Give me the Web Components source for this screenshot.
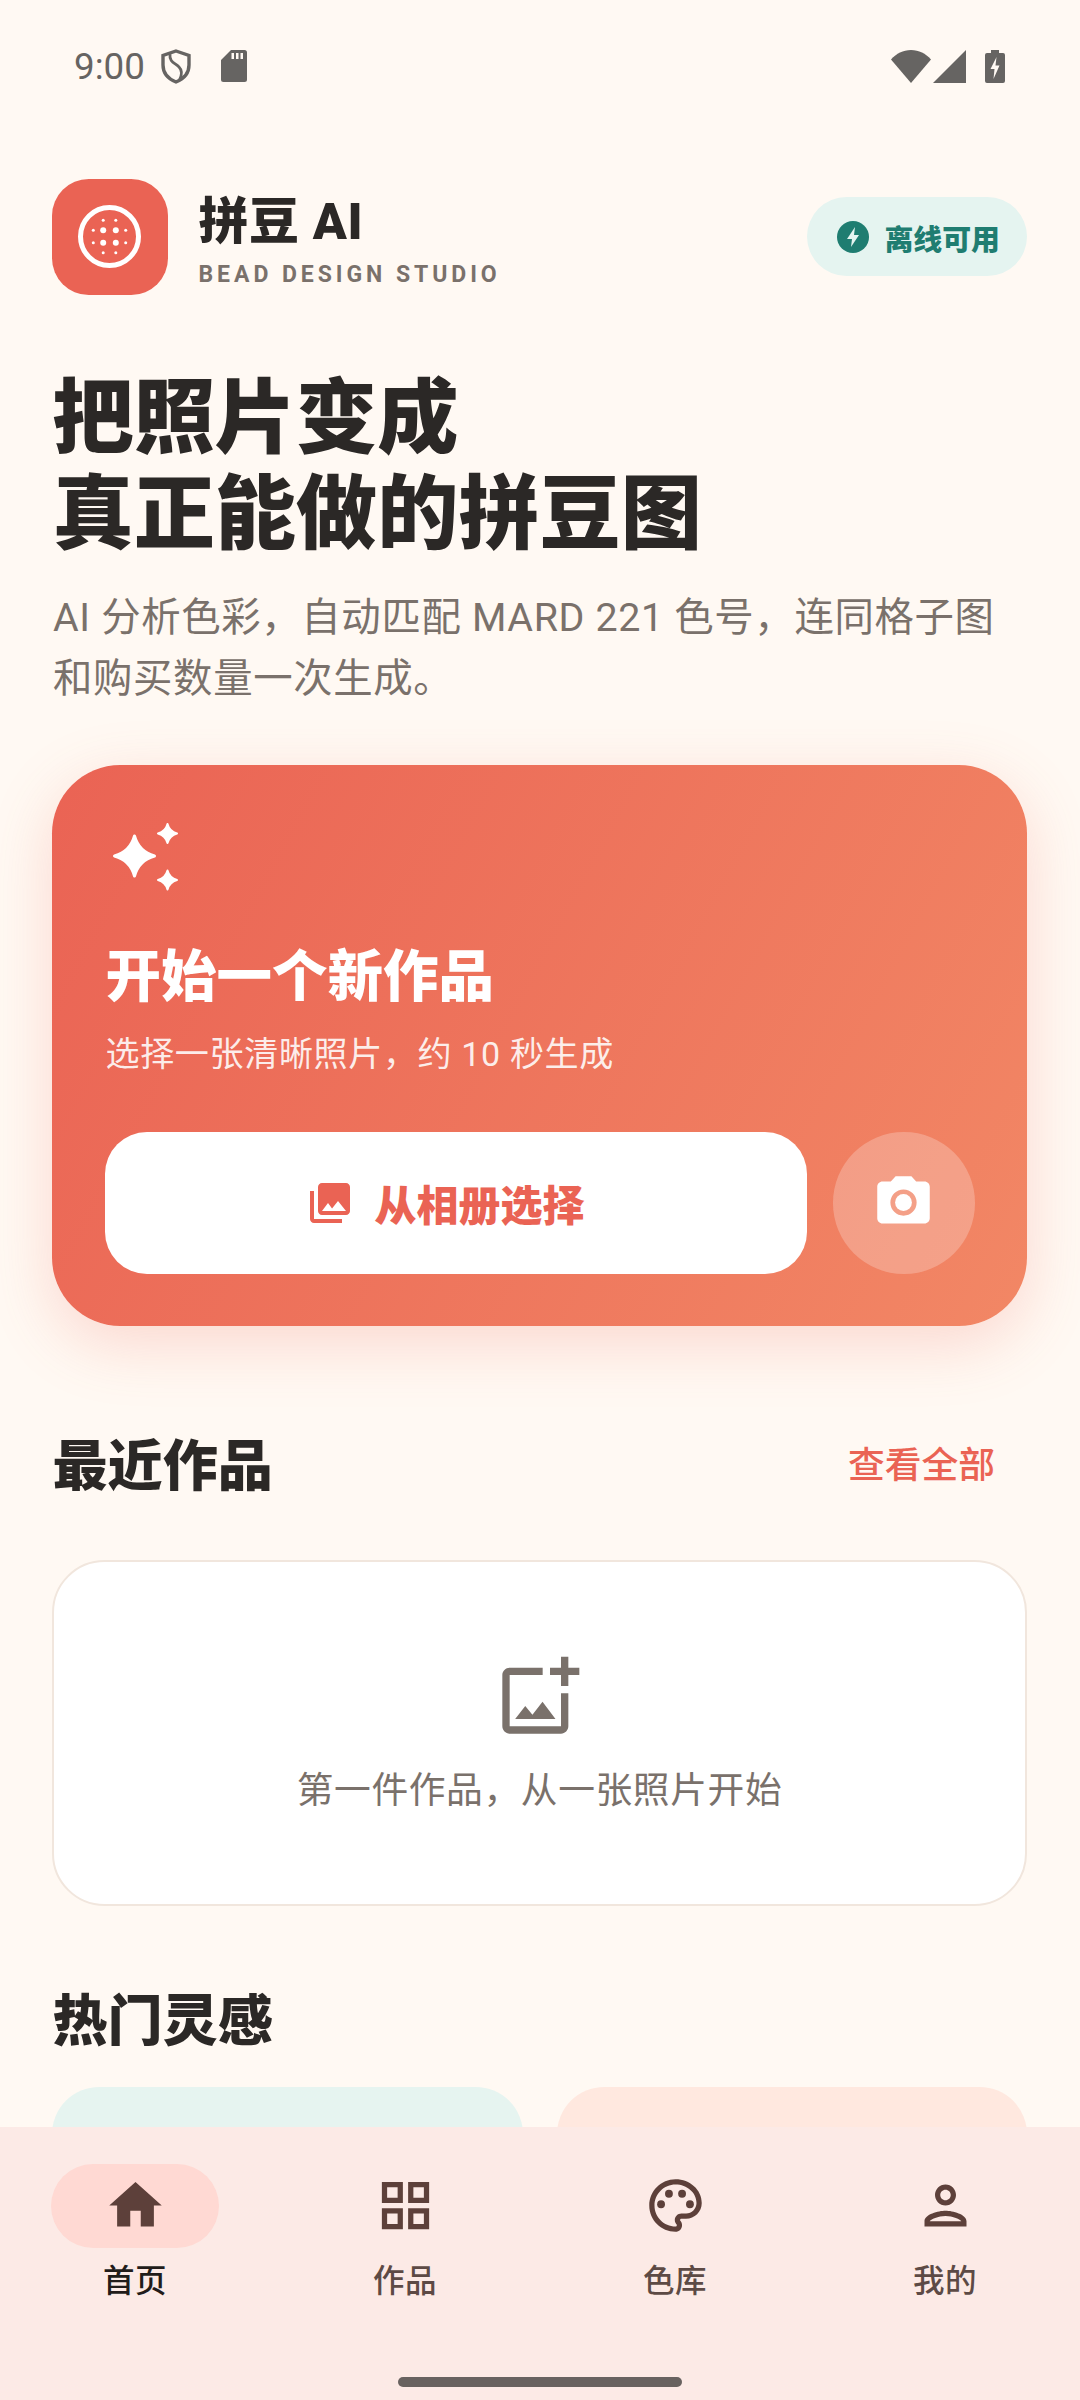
<!DOCTYPE html>
<html lang="zh-CN">
<head>
<meta charset="utf-8">
<title>拼豆 AI</title>
<style>
  html, body { margin: 0; padding: 0; background: #FFF9F3; }
  body { font-family: Roboto, "Noto Sans CJK SC", sans-serif; }
</style>
</head>
<body>
<bd-app>
  <bd-status-bar slot="status" time="9:00"></bd-status-bar>
  <bd-header title-text="拼豆 AI" sub="BEAD DESIGN STUDIO" badge="离线可用"></bd-header>
  <bd-hero>
    <span slot="title">把照片变成<br>真正能做的拼豆图</span>
    AI 分析色彩，自动匹配 MARD 221 色号，连同格子图<br>和购买数量一次生成。
  </bd-hero>
  <bd-start-card heading="开始一个新作品" sub="选择一张清晰照片，约 10 秒生成" action="从相册选择"></bd-start-card>
  <bd-section-head heading="最近作品" link="查看全部" style="margin-top:112px"></bd-section-head>
  <bd-empty-card>第一件作品，从一张照片开始</bd-empty-card>
  <bd-section-head heading="热门灵感" style="margin-top:87px"></bd-section-head>
  <bd-inspiration></bd-inspiration>
  <bd-bottom-nav slot="nav"></bd-bottom-nav>
</bd-app>

<script>
const appTemplate = document.createElement('template');
appTemplate.innerHTML = `
  <style>
    :host { display: flex; flex-direction: column; width: 1080px; height: 2400px; overflow: hidden; background: #FFF9F3; }
    main { flex: 1; min-height: 0; overflow: hidden; padding: 0 53px 0 52px; display: flex; flex-direction: column; }
  </style>
  <slot name="status"></slot>
  <main><slot></slot></main>
  <slot name="nav"></slot>
`;

class BdApp extends HTMLElement {
  constructor() {
    super();
    this.attachShadow({ mode: 'open' }).appendChild(appTemplate.content.cloneNode(true));
  }
}

const statusTemplate = document.createElement('template');
statusTemplate.innerHTML = `
  <style>
    :host { display: flex; align-items: center; height: 132px; padding: 0 75px 0 74px; color: #666462; font: 400 36.75px Roboto, sans-serif; flex: none; }
    svg { display: block; fill: #666462; }
    .time { margin-right: 16px; }
    .shield { margin-right: 30px; }
    .right { margin-left: auto; display: flex; align-items: center; }
  </style>
  <span class="time"></span>
  <svg class="shield" width="30" height="35" viewBox="0 0 30 35" style="fill:none;stroke:#666462;stroke-width:3.4">
    <path d="M15 2 L28 6.500 V16 C28 24 22.500 30 15 33 C7.500 30 2 24 2 16 V6.500 Z"/>
    <path d="M9 5 C8 13 14 14 18 18 C21.500 21.500 21 26 18.500 31" stroke-width="2.8"/>
  </svg>
  <svg width="26" height="32" viewBox="0 0 26 32">
    <path fill-rule="evenodd" d="M10 0H23.500A2.500 2.500 0 0 1 26 2.500V29.500A2.500 2.500 0 0 1 23.500 32H2.500A2.500 2.500 0 0 1 0 29.500V10ZM10.500 3V9H13V3ZM15 3V9H17.500V3ZM19.500 3V9H22V3Z"/>
  </svg>
  <div class="right">
    <svg width="40" height="33" viewBox="0 0 40 33" style="margin-right:2px">
      <path d="M0 9.500C5.500 3.500 12 0 20 0S34.500 3.500 40 9.500L20 33Z"/>
    </svg>
    <svg width="33" height="33" viewBox="0 0 33 33" style="margin-right:19px">
      <path d="M33 0V33H0Z"/>
    </svg>
    <svg width="20" height="33" viewBox="0 0 20 33">
      <path fill-rule="evenodd" d="M6 0H14V3H18A2 2 0 0 1 20 5V31A2 2 0 0 1 18 33H2A2 2 0 0 1 0 31V5A2 2 0 0 1 2 3H6ZM11.500 7 5.500 19H9.500L8.500 29 14.500 15.500H10.500Z"/>
    </svg>
  </div>
`;

class BdStatusBar extends HTMLElement {
  constructor() {
    super();
    this.attachShadow({ mode: 'open' }).appendChild(statusTemplate.content.cloneNode(true));
  }

  connectedCallback() {
    this.shadowRoot.querySelector('.time').textContent = this.getAttribute('time');
  }
}

const headerTemplate = document.createElement('template');
headerTemplate.innerHTML = `
  <style>
    :host { display: flex; align-items: center; margin-top: 47px; height: 115.5px; flex: none; }
    .logo { width: 115.5px; height: 115.5px; border-radius: 36.75px; background: #EA6354; display: flex; align-items: center; justify-content: center; flex: none; }
    .text { margin-left: 31px; flex: 1; padding-top: 6px; }
    .name { font: 900 50px/60px Roboto, "Noto Sans CJK SC", sans-serif; color: #2B2826; letter-spacing: .6px; }
    .sub { font: 700 23px/26px Roboto, sans-serif; letter-spacing: 3.94px; color: #7A716B; margin-top: 10px; }
    .badge { display: flex; align-items: center; height: 78.75px; padding: 0 27px 0 30px; border-radius: 40px; background: #E5F4F0; color: #1F7D71; font: 800 28.9px Roboto, "Noto Sans CJK SC", sans-serif; }
    .badge svg { margin-right: 15px; }
  </style>
  <div class="logo">
    <svg width="63" height="63" viewBox="0 0 63 63" fill="#fff">
      <circle cx="31.5" cy="31.5" r="29" fill="none" stroke="#fff" stroke-width="5"/>
      <circle cx="25.2" cy="25.2" r="3"/><circle cx="37.8" cy="25.2" r="3"/>
      <circle cx="25.2" cy="37.8" r="3"/><circle cx="37.8" cy="37.8" r="3"/>
      <circle cx="25.2" cy="15.3" r="1.5"/><circle cx="37.8" cy="15.3" r="1.5"/>
      <circle cx="25.2" cy="47.7" r="1.5"/><circle cx="37.8" cy="47.7" r="1.5"/>
      <circle cx="15.3" cy="25.2" r="1.5"/><circle cx="47.7" cy="25.2" r="1.5"/>
      <circle cx="15.3" cy="37.8" r="1.5"/><circle cx="47.7" cy="37.8" r="1.5"/>
    </svg>
  </div>
  <div class="text">
    <div class="name"></div>
    <div class="sub"></div>
  </div>
  <div class="badge">
    <svg width="32" height="32" viewBox="0 0 32 32">
      <circle cx="16" cy="16" r="16" fill="#1F7D71"/>
      <path d="M18 6 10 18H15L14 26 22 14H17Z" fill="#E5F4F0"/>
    </svg>
    <span></span>
  </div>
`;

class BdHeader extends HTMLElement {
  constructor() {
    super();
    this.attachShadow({ mode: 'open' }).appendChild(headerTemplate.content.cloneNode(true));
  }

  connectedCallback() {
    this.shadowRoot.querySelector('.name').textContent = this.getAttribute('title-text');
    this.shadowRoot.querySelector('.sub').textContent = this.getAttribute('sub');
    this.shadowRoot.querySelector('.badge span').textContent = this.getAttribute('badge');
  }
}

const heroTemplate = document.createElement('template');
heroTemplate.innerHTML = `
  <style>
    :host { display: block; margin-top: 76px; flex: none; }
    h1 { margin: 0; font: 800 81.2px/96.5px Roboto, "Noto Sans CJK SC", sans-serif; color: #2B2826; margin-left: .5px; }
    p { margin: 23px 0 0 1px; font: 400 39.4px/61.5px Roboto, "Noto Sans CJK SC", sans-serif; letter-spacing: .65px; color: #7A716B; white-space: nowrap; }
  </style>
  <h1><slot name="title"></slot></h1>
  <p><slot></slot></p>
`;

class BdHero extends HTMLElement {
  constructor() {
    super();
    this.attachShadow({ mode: 'open' }).appendChild(heroTemplate.content.cloneNode(true));
  }
}

const startTemplate = document.createElement('template');
startTemplate.innerHTML = `
  <style>
    :host { display: block; margin-top: 55px; height: 561px; padding: 52.5px; box-sizing: border-box; border-radius: 68.25px; background: linear-gradient(118deg, #EA6354, #F28765); box-shadow: 0 18px 63px rgba(235, 100, 84, .22); color: #fff; flex: none; }
    svg { display: block; }
    .spark { margin: 5.5px 0 0 7.5px; }
    h2 { margin: 47.5px 0 0 1px; font: 800 55.5px/80px Roboto, "Noto Sans CJK SC", sans-serif; }
    p { margin: 14px 0 0 1px; font: 400 34.1px/44px Roboto, "Noto Sans CJK SC", sans-serif; letter-spacing: .6px; color: rgba(255, 255, 255, .88); }
    .actions { display: flex; gap: 26.25px; margin-top: 56px; }
    .main { flex: 1; height: 141.75px; box-sizing: border-box; padding-right: 20px; border-radius: 42px; background: #fff; color: #EA6354; display: flex; align-items: center; justify-content: center; gap: 20px; font: 800 42px Roboto, "Noto Sans CJK SC", sans-serif; }
    .camera { width: 141.75px; height: 141.75px; border-radius: 50%; background: rgba(255, 255, 255, .24); display: flex; align-items: center; justify-content: center; flex: none; }
  </style>
  <svg class="spark" width="68" height="68" viewBox="0 0 68 68" fill="#fff" stroke="#fff" stroke-linejoin="round">
    <path stroke-width="3" d="M22.500 13C25.500 24 31.500 30 42.500 33C31.500 36 25.500 42 22.500 53C19.500 42 13.500 36 2.500 33C13.500 30 19.500 24 22.500 13Z"/>
    <path stroke-width="2" d="M55.500 1C56.900 6.200 59.800 9.100 65 10.500C59.800 11.900 56.900 14.800 55.500 20C54.100 14.800 51.200 11.900 46 10.500C51.200 9.100 54.100 6.200 55.500 1Z"/>
    <path stroke-width="2" d="M55.500 47.500C56.900 52.700 59.800 55.600 65 57C59.800 58.400 56.900 61.300 55.500 66.500C54.100 61.300 51.200 58.400 46 57C51.200 55.600 54.100 52.700 55.500 47.500Z"/>
  </svg>
  <h2></h2>
  <p></p>
  <div class="actions">
    <div class="main">
      <svg width="48" height="48" viewBox="0 0 24 24" fill="#EA6354">
        <path d="M22 16V4c0-1.100-.9-2-2-2H8c-1.100 0-2 .9-2 2v12c0 1.100.9 2 2 2h12c1.100 0 2-.9 2-2zm-11-4 2.030 2.710L16 11l4 5H8l3-4zM2 6v14c0 1.100.9 2 2 2h14v-2H4V6H2z"/>
      </svg>
      <span></span>
    </div>
    <div class="camera">
      <svg width="63" height="63" viewBox="0 0 24 24" fill="#fff">
        <path fill-rule="evenodd" d="M9 2 7.170 4H4c-1.100 0-2 .9-2 2v12c0 1.100.9 2 2 2h16c1.100 0 2-.9 2-2V6c0-1.100-.9-2-2-2h-3.170L15 2H9zm3 15a5 5 0 1 1 0-10 5 5 0 0 1 0 10z"/>
        <circle cx="12" cy="12" r="3.200"/>
      </svg>
    </div>
  </div>
`;

class BdStartCard extends HTMLElement {
  constructor() {
    super();
    this.attachShadow({ mode: 'open' }).appendChild(startTemplate.content.cloneNode(true));
  }

  connectedCallback() {
    this.shadowRoot.querySelector('h2').textContent = this.getAttribute('heading');
    this.shadowRoot.querySelector('p').textContent = this.getAttribute('sub');
    this.shadowRoot.querySelector('.main span').textContent = this.getAttribute('action');
  }
}

const sectionTemplate = document.createElement('template');
sectionTemplate.innerHTML = `
  <style>
    :host { display: flex; align-items: center; justify-content: space-between; height: 56px; flex: none; }
    h3 { margin: 0 0 0 .5px; font: 800 55.1px/56px Roboto, "Noto Sans CJK SC", sans-serif; color: #2B2826; }
    a { font: 500 36.75px/56px Roboto, "Noto Sans CJK SC", sans-serif; color: #EA6354; margin-right: 32px; }
  </style>
  <h3></h3>
  <a></a>
`;

class BdSectionHead extends HTMLElement {
  constructor() {
    super();
    this.attachShadow({ mode: 'open' }).appendChild(sectionTemplate.content.cloneNode(true));
  }

  connectedCallback() {
    this.shadowRoot.querySelector('h3').textContent = this.getAttribute('heading');
    this.shadowRoot.querySelector('a').textContent = this.getAttribute('link') || '';
  }
}

const emptyTemplate = document.createElement('template');
emptyTemplate.innerHTML = `
  <style>
    :host { display: flex; flex-direction: column; align-items: center; margin-top: 66px; height: 346.5px; box-sizing: border-box; padding-top: 91px; border: 2.6px solid #F1E6DD; border-radius: 52.5px; background: #fff; color: #7A716B; font: 400 36.75px/50px Roboto, "Noto Sans CJK SC", sans-serif; letter-spacing: .6px; flex: none; }
    svg { display: block; fill: #7A716B; margin-left: -1px; }
    div { margin-top: 25px; }
  </style>
  <svg width="88" height="88" viewBox="0 0 24 24">
    <path d="M18 20H4V6h9V4H4c-1.100 0-2 .9-2 2v14c0 1.100.9 2 2 2h14c1.100 0 2-.9 2-2v-9h-2v9zm-7.790-3.170-1.960-2.360L5.500 18h11l-3.540-4.710zM20 4V1h-2v3h-3c.01.01 0 2 0 2h3v2.990c.01.01 2 0 2 0V6h3V4h-3z"/>
  </svg>
  <div><slot></slot></div>
`;

class BdEmptyCard extends HTMLElement {
  constructor() {
    super();
    this.attachShadow({ mode: 'open' }).appendChild(emptyTemplate.content.cloneNode(true));
  }
}

const inspirationTemplate = document.createElement('template');
inspirationTemplate.innerHTML = `
  <style>
    :host { display: grid; grid-template-columns: 1fr 1fr; gap: 34px; margin-top: 38px; flex: none; }
    div { height: 420px; border-radius: 47.25px; }
    .mint { background: #E6F4F0; }
    .peach { background: #FFE8DF; }
  </style>
  <div class="mint"></div>
  <div class="peach"></div>
`;

class BdInspiration extends HTMLElement {
  constructor() {
    super();
    this.attachShadow({ mode: 'open' }).appendChild(inspirationTemplate.content.cloneNode(true));
  }
}

const navIcons = {
  home: '<path d="M10 20v-6h4v6h5v-8h3L12 3 2 12h3v8z"/>',
  grid: '<path d="M3 3v8h8V3H3zm6 6H5V5h4v4zm-6 4v8h8v-8H3zm6 6H5v-4h4v4zm4-16v8h8V3h-8zm6 6h-4V5h4v4zm-6 4v8h8v-8h-8zm6 6h-4v-4h4v4z"/>',
  palette: '<path d="M12 22C6.490 22 2 17.510 2 12S6.490 2 12 2s10 4.040 10 9c0 3.310-2.690 6-6 6h-1.770c-.28 0-.5.22-.5.5 0 .12.05.23.13.33.41.47.64 1.060.64 1.670 0 1.380-1.120 2.500-2.500 2.500zm0-18c-4.410 0-8 3.590-8 8s3.590 8 8 8c.28 0 .5-.22.5-.5 0-.16-.08-.28-.14-.35-.41-.46-.63-1.050-.63-1.650 0-1.380 1.120-2.500 2.500-2.500H16c2.210 0 4-1.790 4-4 0-3.860-3.590-7-8-7z"/><circle cx="6.500" cy="11.500" r="1.500"/><circle cx="9.500" cy="7.500" r="1.500"/><circle cx="14.500" cy="7.500" r="1.500"/><circle cx="17.500" cy="11.500" r="1.500"/>',
  person: '<path d="M12 6c1.100 0 2 .9 2 2s-.9 2-2 2-2-.9-2-2 .9-2 2-2m0 10c2.700 0 5.800 1.290 6 2H6c.23-.72 3.310-2 6-2m0-12C9.790 4 8 5.790 8 8s1.790 4 4 4 4-1.790 4-4-1.790-4-4-4zm0 10c-2.670 0-8 1.340-8 4v2h16v-2c0-2.660-5.330-4-8-4z"/>'
};

const navItemTemplate = document.createElement('template');
navItemTemplate.innerHTML = `
  <style>
    :host { display: flex; flex-direction: column; align-items: center; flex: 1; color: #5D4A45; font: 500 31.5px/42px Roboto, "Noto Sans CJK SC", sans-serif; letter-spacing: .6px; }
    :host([active]) { color: #221C1A; }
    .pill { width: 168px; height: 84px; border-radius: 42px; display: flex; align-items: center; justify-content: center; }
    :host([active]) .pill { background: #FFD9D3; }
    svg { display: block; fill: #5D403A; }
    .label { margin-top: 13px; }
  </style>
  <div class="pill"><svg width="63" height="63" viewBox="0 0 24 24"></svg></div>
  <div class="label"><slot></slot></div>
`;

class BdNavItem extends HTMLElement {
  constructor() {
    super();
    this.attachShadow({ mode: 'open' }).appendChild(navItemTemplate.content.cloneNode(true));
  }

  connectedCallback() {
    this.shadowRoot.querySelector('svg').innerHTML = navIcons[this.getAttribute('icon')];
  }
}

const navTemplate = document.createElement('template');
navTemplate.innerHTML = `
  <style>
    :host { display: block; position: relative; height: 273px; background: #FCEAE6; flex: none; }
    .items { display: flex; padding-top: 36.75px; }
    .handle { width: 284px; height: 10px; border-radius: 5px; background: #686260; margin: 74px auto 0; }
  </style>
  <div class="items">
    <bd-nav-item icon="home" active>首页</bd-nav-item>
    <bd-nav-item icon="grid">作品</bd-nav-item>
    <bd-nav-item icon="palette">色库</bd-nav-item>
    <bd-nav-item icon="person">我的</bd-nav-item>
  </div>
  <div class="handle"></div>
`;

class BdBottomNav extends HTMLElement {
  constructor() {
    super();
    this.attachShadow({ mode: 'open' }).appendChild(navTemplate.content.cloneNode(true));
  }
}

customElements.define('bd-app', BdApp);
customElements.define('bd-status-bar', BdStatusBar);
customElements.define('bd-header', BdHeader);
customElements.define('bd-hero', BdHero);
customElements.define('bd-start-card', BdStartCard);
customElements.define('bd-section-head', BdSectionHead);
customElements.define('bd-empty-card', BdEmptyCard);
customElements.define('bd-inspiration', BdInspiration);
customElements.define('bd-nav-item', BdNavItem);
customElements.define('bd-bottom-nav', BdBottomNav);
</script>
</body>
</html>
